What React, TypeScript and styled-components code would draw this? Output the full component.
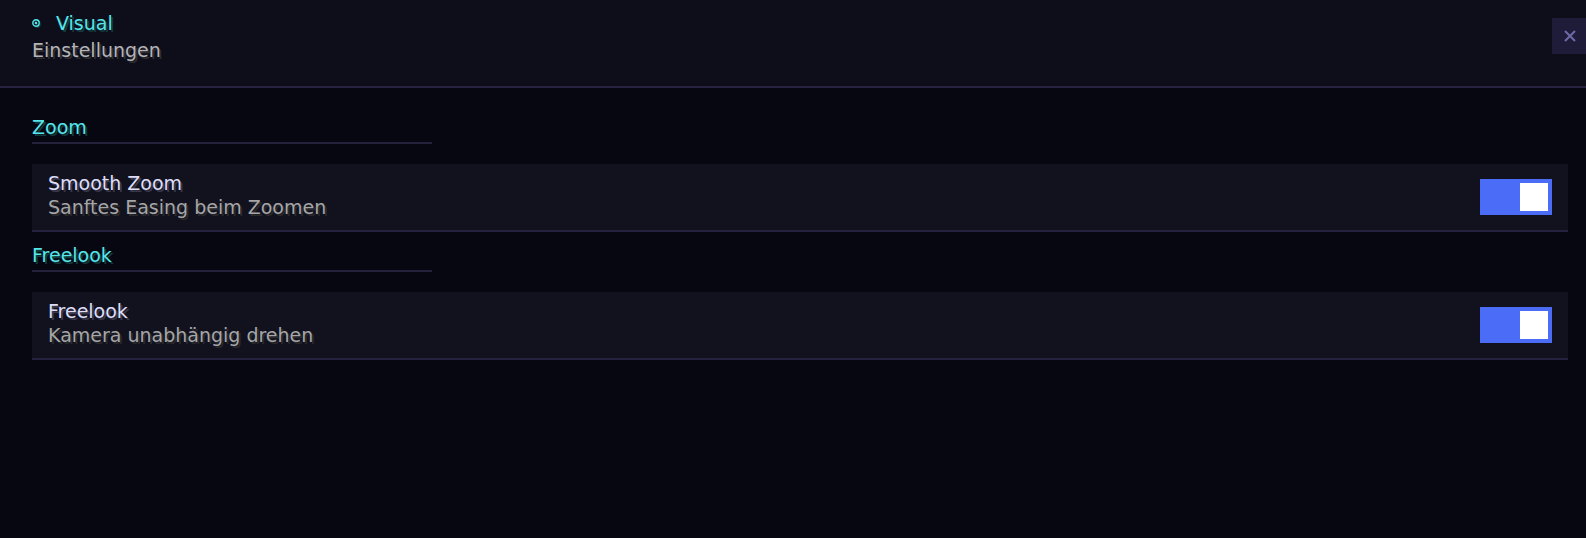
import React, { useState } from 'react';
import styled, { createGlobalStyle } from 'styled-components';

const GlobalStyle = createGlobalStyle`
  html, body {
    margin: 0;
    padding: 0;
    background: #070712;
    height: 100%;
  }
  body {
    font-family: "DejaVu Sans", "Noto Sans", sans-serif;
    font-size: 19px;
    line-height: 24px;
  }
  #root {
    min-height: 100vh;
  }
`;

const Page = styled.div`
  min-height: 100vh;
  background: #070712;
  display: flex;
  flex-direction: column;
`;

const Header = styled.header`
  display: flex;
  justify-content: space-between;
  align-items: flex-start;
  padding: 11px 0 24px 32px;
  background: #0e0e1b;
  border-bottom: 2px solid #272340;
`;

const TitleBlock = styled.div`
  display: flex;
  flex-direction: column;
  gap: 3px;
`;

const Kicker = styled.div`
  display: flex;
  align-items: center;
  gap: 15px;
  color: #55e6ea;
  text-shadow: 2px 2px 0 #143a3e;
`;

const Subtitle = styled.div`
  color: #b4b4b8;
  text-shadow: 2px 2px 0 #2d2d30;
`;

const CloseButton = styled.button`
  margin-top: 7px;
  width: 34px;
  height: 36px;
  padding: 0 0 0 2px;
  border: none;
  background: #1e1c39;
  color: #6e6aa8;
  display: flex;
  align-items: center;
  justify-content: center;
  cursor: pointer;
`;

const Content = styled.main`
  padding: 27px 18px 0 32px;
  display: flex;
  flex-direction: column;
`;

const SectionTitle = styled.div<{ $first?: boolean }>`
  margin-top: ${(p) => (p.$first ? '0' : '11px')};
  width: 400px;
  padding-bottom: 3px;
  border-bottom: 2px solid #24223b;
  color: #55e6ea;
  text-shadow: 2px 2px 0 #143a3e;
`;

const Card = styled.div`
  margin-top: 20px;
  display: flex;
  align-items: center;
  justify-content: space-between;
  padding: 7px 16px;
  background: #12121f;
  border-bottom: 2px solid #25223f;
`;

const CardText = styled.div`
  display: flex;
  flex-direction: column;
  padding-bottom: 4px;
`;

const CardTitle = styled.div`
  color: #dedef8;
  text-shadow: 2px 2px 0 #38384a;
`;

const CardDesc = styled.div`
  color: #a6a6a8;
  text-shadow: 2px 2px 0 #29292c;
`;

const Toggle = styled.button<{ $on: boolean }>`
  width: 72px;
  height: 36px;
  padding: 4px;
  border: none;
  background: ${(p) => (p.$on ? '#4b6cf6' : '#2a2a3e')};
  display: flex;
  justify-content: ${(p) => (p.$on ? 'flex-end' : 'flex-start')};
  cursor: pointer;
`;

const Knob = styled.span`
  width: 28px;
  height: 28px;
  background: #ffffff;
`;

const Dot = () => (
  <svg width="9" height="9" viewBox="0 0 9 9" style={{ filter: 'drop-shadow(1px 1px 0 #143a3e)' }}>
    <circle cx="4" cy="4" r="3.2" fill="none" stroke="#55e6ea" strokeWidth="1.4" />
    <circle cx="4" cy="4" r="1.2" fill="#55e6ea" />
  </svg>
);

const CloseIcon = () => (
  <svg width="12" height="12" viewBox="0 0 12 12">
    <path d="M1 1 L11 11 M11 1 L1 11" stroke="currentColor" strokeWidth="2" />
  </svg>
);

type Setting = { id: string; section: string; title: string; desc: string };

const settings: Setting[] = [
  { id: 'smooth', section: 'Zoom', title: 'Smooth Zoom', desc: 'Sanftes Easing beim Zoomen' },
  { id: 'freelook', section: 'Freelook', title: 'Freelook', desc: 'Kamera unabhängig drehen' },
];

export default function App() {
  const [state, setState] = useState<Record<string, boolean>>({ smooth: true, freelook: true });

  return (
    <Page>
      <GlobalStyle />
      <Header>
        <TitleBlock>
          <Kicker>
            <Dot />
            <span>Visual</span>
          </Kicker>
          <Subtitle>Einstellungen</Subtitle>
        </TitleBlock>
        <CloseButton aria-label="Schließen">
          <CloseIcon />
        </CloseButton>
      </Header>
      <Content>
        {settings.map((s, i) => (
          <React.Fragment key={s.id}>
            <SectionTitle $first={i === 0}>{s.section}</SectionTitle>
            <Card>
              <CardText>
                <CardTitle>{s.title}</CardTitle>
                <CardDesc>{s.desc}</CardDesc>
              </CardText>
              <Toggle
                $on={state[s.id]}
                onClick={() => setState((prev) => ({ ...prev, [s.id]: !prev[s.id] }))}
              >
                <Knob />
              </Toggle>
            </Card>
          </React.Fragment>
        ))}
      </Content>
    </Page>
  );
}
